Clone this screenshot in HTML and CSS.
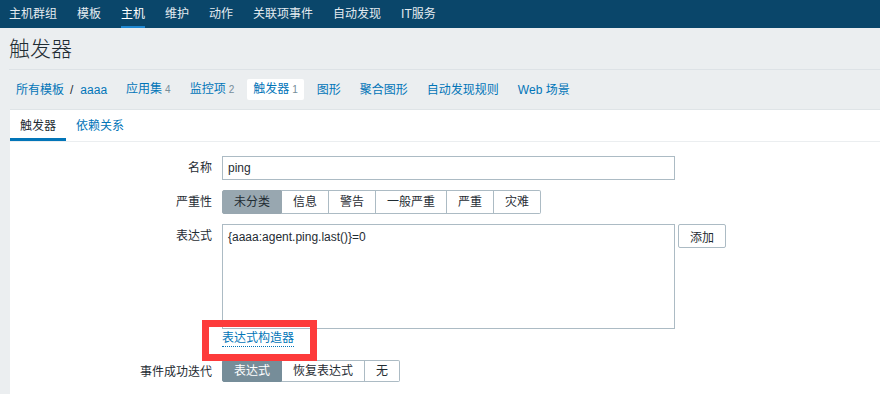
FILE: index.html
```html
<!DOCTYPE html>
<html lang="zh-CN">
<head>
    <meta charset="UTF-8">
    <title>触发器</title>
    <link rel="stylesheet" href="styles.css">
</head>
<body>
    <nav class="top-nav">
        <a href="#">主机群组</a>
        <a href="#">模板</a>
        <a href="#" class="active">主机</a>
        <a href="#">维护</a>
        <a href="#">动作</a>
        <a href="#">关联项事件</a>
        <a href="#">自动发现</a>
        <a href="#">IT服务</a>
    </nav>

    <header class="page-header">
        <h1>触发器</h1>
    </header>

    <nav class="breadcrumbs">
        <div class="crumb-path">
            <a href="#">所有模板</a><span class="sep">/</span><a href="#">aaaa</a>
        </div>
        <a href="#" class="crumb">应用集<span class="count">4</span></a>
        <a href="#" class="crumb">监控项<span class="count">2</span></a>
        <a href="#" class="crumb selected">触发器<span class="count">1</span></a>
        <a href="#" class="crumb">图形</a>
        <a href="#" class="crumb">聚合图形</a>
        <a href="#" class="crumb">自动发现规则</a>
        <a href="#" class="crumb">Web 场景</a>
    </nav>

    <main class="content">
        <div class="tabs">
            <a href="#" class="tab active">触发器</a>
            <a href="#" class="tab">依赖关系</a>
        </div>

        <form class="trigger-form">
            <div class="form-row">
                <label class="form-label">名称</label>
                <div class="form-field">
                    <input type="text" class="text-input" value="ping">
                </div>
            </div>

            <div class="form-row">
                <label class="form-label">严重性</label>
                <div class="form-field">
                    <ul class="radio-list severity">
                        <li class="checked">未分类</li>
                        <li>信息</li>
                        <li>警告</li>
                        <li>一般严重</li>
                        <li>严重</li>
                        <li>灾难</li>
                    </ul>
                </div>
            </div>

            <div class="form-row">
                <label class="form-label">表达式</label>
                <div class="form-field expression">
                    <div class="expression-box">
                        <textarea class="text-area">{aaaa:agent.ping.last()}=0</textarea>
                        <div class="builder-link">
                            <a href="#">表达式构造器</a>
                            <span class="callout"></span>
                        </div>
                    </div>
                    <button type="button" class="btn">添加</button>
                </div>
            </div>

            <div class="form-row">
                <label class="form-label">事件成功迭代</label>
                <div class="form-field">
                    <ul class="radio-list">
                        <li class="checked">表达式</li>
                        <li>恢复表达式</li>
                        <li>无</li>
                    </ul>
                </div>
            </div>

            <div class="form-row">
                <label class="form-label">问题事件生成模式</label>
                <div class="form-field">
                    <ul class="radio-list">
                        <li class="checked">单个</li>
                        <li>多重</li>
                    </ul>
                </div>
            </div>
        </form>
    </main>
</body>
</html>
```

FILE: styles.css
```css
* {
    box-sizing: border-box;
}

body {
    margin: 0;
    background-color: #ebeef0;
    color: #1f2c33;
    font-family: "Liberation Sans", "Noto Sans CJK SC", sans-serif;
    font-size: 12px;
    overflow: hidden;
}

a {
    text-decoration: none;
}

.top-nav {
    display: flex;
    gap: 20px;
    height: 28px;
    padding: 0 9px;
    background-color: #0a466a;
}

.top-nav a {
    color: #e4ebf0;
    line-height: 28px;
}

.top-nav a.active {
    color: #fff;
    box-shadow: inset 0 -2px #1e87d1;
}

.page-header {
    margin-left: 9px;
    padding: 9px 0 8px;
    border-bottom: 1px solid #dde2e6;
}

h1 {
    margin: 0;
    font-size: 21px;
    font-weight: 300;
    line-height: 24px;
    color: #1f2c33;
}

.breadcrumbs {
    display: flex;
    align-items: center;
    gap: 7px;
    height: 39px;
    padding-left: 10px;
}

.crumb-path,
.crumb {
    padding: 0 6px;
    line-height: 20px;
    color: #0275b8;
}

.crumb-path a {
    color: #0275b8;
}

.crumb-path .sep {
    margin: 0 7px 0 6px;
    color: #1f2c33;
}

.crumb.selected {
    background-color: #fff;
    border-radius: 2px;
}

.count {
    margin-left: 3px;
    font-size: 10px;
    color: #768d99;
}

.content {
    margin-left: 10px;
    min-height: 300px;
    background-color: #fff;
    border-top: 1px solid #dfe4e7;
}

.tabs {
    display: flex;
    border-bottom: 1px solid #ebeef0;
}

.tab {
    padding: 4px 10px 0;
    line-height: 24px;
    color: #0275b8;
    border-bottom: 3px solid transparent;
}

.tab.active {
    color: #1f2c33;
    border-bottom-color: #0275b8;
}

.trigger-form {
    padding-top: 9px;
}

.form-row {
    display: flex;
    align-items: flex-start;
    padding: 5px 0;
}

.form-label {
    width: 202px;
    margin-right: 10px;
    text-align: right;
    line-height: 24px;
}

.form-field {
    display: flex;
    align-items: flex-start;
}

.text-input {
    width: 453px;
    height: 24px;
    padding: 0 5px;
    border: 1px solid #acbbc4;
    font-family: inherit;
    font-size: 12px;
    color: #1f2c33;
}

.radio-list {
    display: flex;
    margin: 0;
    padding: 0;
    list-style: none;
}

.radio-list li {
    height: 22px;
    padding: 0 11px;
    line-height: 20px;
    border: 1px solid #acbbc4;
    border-left: none;
    background-color: #fff;
}

.radio-list li:first-child {
    border-left: 1px solid #acbbc4;
    border-radius: 2px 0 0 2px;
}

.radio-list li:last-child {
    border-radius: 0 2px 2px 0;
}

.radio-list li.checked {
    background-color: #768d99;
    border-color: #768d99;
    color: #fff;
}

.radio-list.severity li {
    height: 24px;
    line-height: 22px;
}

.radio-list.severity li.checked {
    background-color: #98a7b0;
    border-color: #98a7b0;
    color: #1f2c33;
}

.expression-box {
    display: flex;
    flex-direction: column;
}

.text-area {
    width: 453px;
    height: 105px;
    padding: 4px 5px;
    border: 1px solid #acbbc4;
    font-family: inherit;
    font-size: 12px;
    line-height: 16px;
    color: #1f2c33;
    resize: none;
}

.builder-link {
    position: relative;
    margin-top: 2px;
    padding-bottom: 3px;
}

.builder-link a {
    display: inline-block;
    line-height: 15px;
    color: #0275b8;
    border-bottom: 1px dotted #0275b8;
}

.callout {
    position: absolute;
    left: -20px;
    top: -11px;
    width: 115px;
    height: 41px;
    border: 7px solid #fd3b3b;
}

.btn {
    height: 24px;
    margin-left: 3px;
    padding: 0 11px;
    border: 1px solid #acbbc4;
    border-radius: 2px;
    background-color: #fff;
    font-family: inherit;
    font-size: 12px;
    color: #1f2c33;
}
```
